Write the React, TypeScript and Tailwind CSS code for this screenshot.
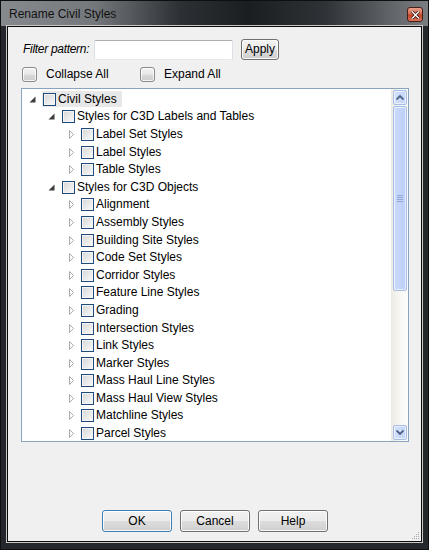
import React from 'react';

type TreeNode = { label: string; level: number; expanded?: boolean; focused?: boolean };

const nodes: TreeNode[] = [
  { label: 'Civil Styles', level: 0, expanded: true, focused: true },
  { label: 'Styles for C3D Labels and Tables', level: 1, expanded: true },
  { label: 'Label Set Styles', level: 2 },
  { label: 'Label Styles', level: 2 },
  { label: 'Table Styles', level: 2 },
  { label: 'Styles for C3D Objects', level: 1, expanded: true },
  { label: 'Alignment', level: 2 },
  { label: 'Assembly Styles', level: 2 },
  { label: 'Building Site Styles', level: 2 },
  { label: 'Code Set Styles', level: 2 },
  { label: 'Corridor Styles', level: 2 },
  { label: 'Feature Line Styles', level: 2 },
  { label: 'Grading', level: 2 },
  { label: 'Intersection Styles', level: 2 },
  { label: 'Link Styles', level: 2 },
  { label: 'Marker Styles', level: 2 },
  { label: 'Mass Haul Line Styles', level: 2 },
  { label: 'Mass Haul View Styles', level: 2 },
  { label: 'Matchline Styles', level: 2 },
  { label: 'Parcel Styles', level: 2 },
];

const indent = ['pl-[7px]', 'pl-[26px]', 'pl-[45px]'];

const vistaBtn =
  'flex items-center justify-center rounded-[3px] border border-[#707070] bg-[linear-gradient(to_bottom,#f2f2f2_0%,#ebebeb_50%,#dddddd_50%,#cfcfcf_100%)] shadow-[inset_0_0_0_1px_rgba(255,255,255,0.85)] text-black';

const Expander = ({ expanded }: { expanded?: boolean }) =>
  expanded ? (
    <svg width="7" height="7" viewBox="0 0 7 7">
      <path d="M6.5 0.5 V6.5 H0.5 Z" fill="#3c3c3c" />
    </svg>
  ) : (
    <svg width="6" height="9" viewBox="0 0 6 9" className="ml-[2px]">
      <path d="M0.5 0.5 L4.5 4.5 L0.5 8.5 Z" fill="#fff" stroke="#a9a9a9" />
    </svg>
  );

const TreeCheck = () => (
  <span className="block h-[13px] w-[13px] shrink-0 border border-[#1f4a7c] bg-[linear-gradient(135deg,#d6d6d6_0%,#ececec_60%,#f9f9f9_100%)] shadow-[inset_0_0_0_1px_#f4f4f4]" />
);

const PushCheck = () => (
  <span className="block h-[15px] w-[15px] shrink-0 rounded-[3px] border border-[#8a8a8a] bg-[linear-gradient(to_bottom,#f4f4f4_0%,#e6e6e6_50%,#d8d8d8_55%,#cdcdcd_100%)] shadow-[inset_0_0_0_1px_rgba(255,255,255,0.8)]" />
);

const Chevron = ({ up }: { up?: boolean }) => (
  <svg width="8" height="5" viewBox="0 0 8 5">
    <path d={up ? 'M0.5 4.5 L4 1 L7.5 4.5' : 'M0.5 0.5 L4 4 L7.5 0.5'} fill="none" stroke="#4d6185" strokeWidth="1.8" />
  </svg>
);

export default function App() {
  return (
    <div
      className="flex h-[550px] w-[429px] flex-col overflow-hidden border border-[#0d0f11] bg-[#24282c] text-[12px] leading-[15px] text-black"
      style={{ fontFamily: '"Liberation Sans", Arial, sans-serif' }}
    >
      {/* title bar */}
      <div className="flex h-[25px] shrink-0 items-start justify-between bg-[linear-gradient(to_right,#868a8e_0%,#74787c_22%,#2c3034_42%,#1b1e21_58%,#2f3236_76%,#63676b_92%,#7a7e82_100%)] pl-[8px] pr-[5px] pt-[6px]">
        <span className="text-[#111]">Rename Civil Styles</span>
        <span className="flex h-[15px] w-[16px] items-center justify-center rounded-[3px] border border-[#4a1e18] bg-[linear-gradient(to_bottom,#e8a08c_0%,#d4694f_45%,#c0432a_55%,#d8775c_100%)]">
          <svg width="9" height="8" viewBox="0 0 9 8">
            <path d="M1 0.5 L8 7.5 M8 0.5 L1 7.5" stroke="#3a1510" strokeWidth="3" />
            <path d="M1 0.5 L8 7.5 M8 0.5 L1 7.5" stroke="#fff" strokeWidth="1.4" />
          </svg>
        </span>
      </div>

      {/* client area */}
      <div className="mx-[6px] mb-[7px] flex flex-1 flex-col border border-[#0a0a0a] bg-[#f0f0f0] shadow-[0_0_0_1px_#c8c8c8]">
        {/* filter row */}
        <div className="mt-[12px] flex h-[21px] items-center">
          <span className="ml-[15px] w-[71px] shrink-0 italic tracking-[-0.3px]">Filter pattern:</span>
          <span className="h-[20px] w-[139px] rounded-[2px] border border-[#abadb3] border-l-[#dbdfe6] border-r-[#dbdfe6] border-b-[#e3e9ef] bg-white" />
          <span className={`${vistaBtn} ml-[8px] h-[21px] w-[38px]`}>Apply</span>
        </div>

        {/* collapse/expand */}
        <div className="mt-[6px] flex h-[16px] items-center">
          <span className="ml-[14px]">
            <PushCheck />
          </span>
          <span className="ml-[9px] w-[94px] shrink-0">Collapse All</span>
          <PushCheck />
          <span className="ml-[9px]">Expand All</span>
        </div>

        {/* tree */}
        <div className="ml-[13px] mt-[6px] flex h-[354px] w-[388px] border border-[#8aa4c0] bg-white">
          <div className="flex-1 overflow-hidden pt-[1.5px]">
            {nodes.map((n) => (
              <div key={n.label} className={`flex h-[17.6px] items-center ${indent[n.level]}`}>
                <span className="flex w-[13px] shrink-0 items-center">
                  <Expander expanded={n.expanded} />
                </span>
                <span
                  className={`flex h-[16px] items-center gap-[2px] whitespace-nowrap pl-[1px] pr-[5px] ${
                    n.focused ? 'bg-[#e8e8e8]' : ''
                  }`}
                >
                  <TreeCheck />
                  <span>{n.label}</span>
                </span>
              </div>
            ))}
          </div>
          {/* scrollbar */}
          <div className="flex w-[17px] shrink-0 flex-col items-center gap-[1px] bg-[linear-gradient(to_right,#eceae2_0%,#f7f6f2_50%,#fdfdfc_100%)] py-[1px]">
            <span className="flex h-[15px] w-[14px] items-center justify-center rounded-[2px] border border-[#a6bde8] bg-[linear-gradient(to_right,#d3e0fb,#c3d5fb)] shadow-[inset_0_0_0_1px_rgba(255,255,255,0.6)]">
              <Chevron up />
            </span>
            <span className="flex h-[185px] w-[14px] items-center justify-center rounded-[2px] border border-[#a6bde8] bg-[linear-gradient(to_right,#cbdafc,#bccffa)] shadow-[inset_0_0_0_1px_rgba(255,255,255,0.6)]">
              <span className="flex flex-col gap-[1px]">
                <span className="block h-[1px] w-[6px] bg-[#8fa6d6]" />
                <span className="block h-[1px] w-[6px] bg-[#8fa6d6]" />
                <span className="block h-[1px] w-[6px] bg-[#8fa6d6]" />
                <span className="block h-[1px] w-[6px] bg-[#8fa6d6]" />
              </span>
            </span>
            <span className="flex-1" />
            <span className="flex h-[15px] w-[14px] items-center justify-center rounded-[2px] border border-[#a6bde8] bg-[linear-gradient(to_right,#d3e0fb,#c3d5fb)] shadow-[inset_0_0_0_1px_rgba(255,255,255,0.6)]">
              <Chevron />
            </span>
          </div>
        </div>

        <div className="flex-1" />

        {/* bottom buttons */}
        <div className="flex items-center gap-[8px] pl-[94px]">
          <span className={`${vistaBtn} h-[22px] w-[70px] !border-[#3c7fb1] shadow-[inset_0_0_0_1px_#a8dcf5]`}>OK</span>
          <span className={`${vistaBtn} h-[22px] w-[70px]`}>Cancel</span>
          <span className={`${vistaBtn} h-[22px] w-[70px]`}>Help</span>
        </div>

        <div className="flex h-[9px] justify-end pr-[1px]">
          <svg width="9" height="9" viewBox="0 0 9 9" className="mt-[-1px]">
            <g fill="#a8a8a8">
              <rect x="7" y="1" width="1" height="1" />
              <rect x="5" y="3" width="1" height="1" />
              <rect x="7" y="3" width="1" height="1" />
              <rect x="3" y="5" width="1" height="1" />
              <rect x="5" y="5" width="1" height="1" />
              <rect x="7" y="5" width="1" height="1" />
              <rect x="1" y="7" width="1" height="1" />
              <rect x="3" y="7" width="1" height="1" />
              <rect x="5" y="7" width="1" height="1" />
              <rect x="7" y="7" width="1" height="1" />
            </g>
          </svg>
        </div>
      </div>
    </div>
  );
}
